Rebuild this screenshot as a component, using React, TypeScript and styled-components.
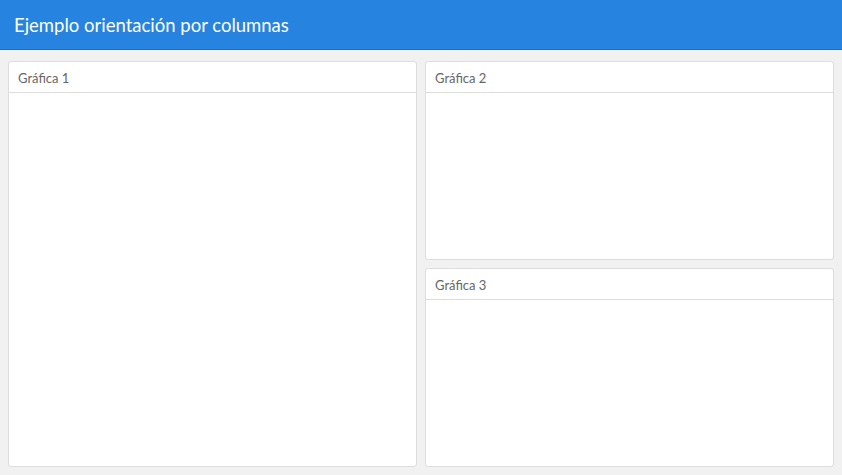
import React from 'react'
import styled, { createGlobalStyle } from 'styled-components'

const GlobalStyle = createGlobalStyle`
    html, body {
        margin: 0;
        padding: 0;
        background: #f1f1f1;
        font-family: Lato, "Open Sans", sans-serif;
    }
`

const charts = {
    left: ['Gráfica 1'],
    right: ['Gráfica 2', 'Gráfica 3'],
}

export default function App() {
    return (
        <>
            <GlobalStyle />
            <Page>
                <Navbar>
                    <Brand>Ejemplo orientación por columnas</Brand>
                </Navbar>
                <Columns>
                    <Column>
                        {charts.left.map((title) => (
                            <Card key={title} title={title} />
                        ))}
                    </Column>
                    <Column>
                        {charts.right.map((title) => (
                            <Card key={title} title={title} />
                        ))}
                    </Column>
                </Columns>
            </Page>
        </>
    )
}

const Card: React.FC<{ title: string }> = ({ title }) => (
    <Panel>
        <PanelTitle>{title}</PanelTitle>
        <PanelBody />
    </Panel>
)

const Page = styled.div`
    display: flex;
    flex-direction: column;
    height: 475px;
`

const Navbar = styled.header`
    height: 49px;
    flex-shrink: 0;
    background: #2683df;
    border-bottom: 1px solid #1b6ec2;
    display: flex;
    align-items: center;
    padding-left: 14px;
`

const Brand = styled.span`
    color: #ffffff;
    font-size: 18.5px;
    line-height: 1;
    padding-top: 1px;
`

const Columns = styled.main`
    flex: 1;
    display: grid;
    grid-template-columns: 1fr 1fr;
    column-gap: 8px;
    padding: 11px 8px 8px 8px;
    min-height: 0;
`

const Column = styled.div`
    display: flex;
    flex-direction: column;
    row-gap: 8px;
    min-height: 0;
`

const Panel = styled.section`
    flex: 1;
    display: flex;
    flex-direction: column;
    background: #ffffff;
    border: 1px solid #dddddd;
    border-radius: 3px;
    min-height: 0;
`

const PanelTitle = styled.div`
    height: 31px;
    flex-shrink: 0;
    display: flex;
    align-items: center;
    padding: 1px 9px 0;
    box-sizing: border-box;
    border-bottom: 1px solid #dddddd;
    color: #666666;
    font-size: 13px;
`

const PanelBody = styled.div`
    flex: 1;
`
